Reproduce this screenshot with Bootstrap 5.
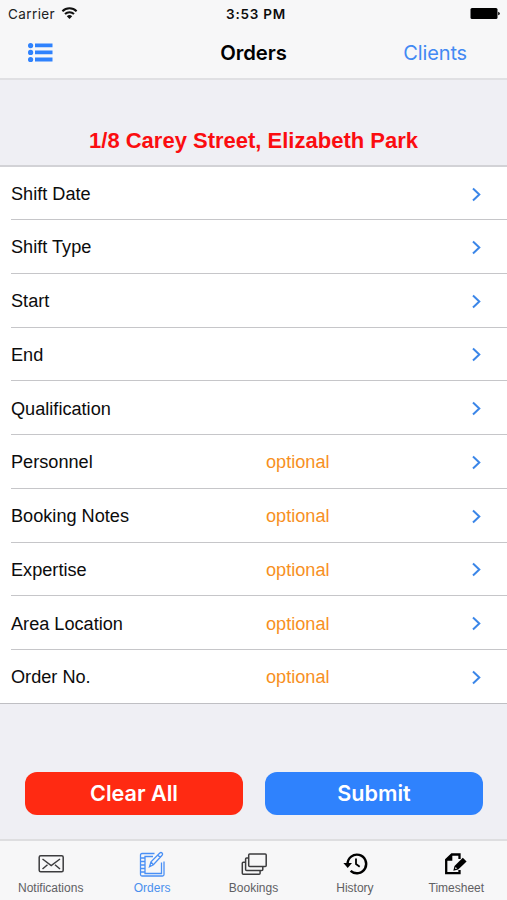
<!DOCTYPE html>
<html lang="en">
<head>
<meta charset="utf-8">
<meta name="viewport" content="width=device-width, initial-scale=1">
<title>Orders</title>
<link href="https://cdn.jsdelivr.net/npm/bootstrap@5.3.0/dist/css/bootstrap.min.css" rel="stylesheet">
<style>
  :root { --ios-blue: #2f82fd; --sans: "Liberation Sans", Arial, sans-serif; --ui: Inter, "Liberation Sans", sans-serif; }
  body { font-family: var(--sans); background: #efeff4; color: #0c0c0c; }
  svg { display: block; flex: none; }
  .screen { height: 900px; overflow: hidden; }
  .top-area { height: 80px; background: #f7f7f8; border-bottom: 2px solid #e0e0e3; font-family: var(--ui); }
  .status { height: 28px; font-size: 13.5px; line-height: 28px; padding: 0 7px 0 8px; }
  .carrier { letter-spacing: .4px; color: #222; margin-right: 2px; }
  .side { flex: 1 1 0; }
  .clock { font-weight: 600; font-size: 13.5px; letter-spacing: .75px; padding-left: 4px; }
  .title-bar { height: 50px; padding: 0 40px 0 28px; }
  .title-bar h1 { font-size: 20.3px; font-weight: 600; color: #000; letter-spacing: -.1px; margin: 0 -6px 0 6px; }
  .clients { font-size: 20px; color: #4289f3; text-decoration: none; letter-spacing: -.15px; }
  .address { height: 85px; padding-top: 47px; font-size: 22px; line-height: 28px; font-weight: 700; color: #fb0d10; white-space: nowrap; }
  .order-list { border-top: 2px solid #d2d2d6; border-bottom: 1px solid #bfbfc3; background: #fff; height: 539px; padding-left: 11px; }
  .order-row { flex: 0 0 53.75px; font-size: 18.15px; color: inherit; text-decoration: none; border-bottom: 1px solid #c6c6c9; padding: 2px 25px 0 0; }
  .order-row:first-child { flex-basis: 53px; }
  .order-row:last-child { border-bottom: 0; flex-basis: 53px; }
  .row-label { width: 255px; }
  .row-label, .opt { padding-top: 1px; }
  .opt { color: #f7901e; }
  .actions { padding: 67.5px 24px 0 25px; gap: 22px; }
  .action { height: 43px; border-radius: 12px; border: 0; padding: 0; font: 600 21.6px/43px var(--ui); color: #fff; }
  .action-clear, .action-clear:hover { background: #ff2a12; color: #fff; }
  .action-submit, .action-submit:hover { background: var(--ios-blue); color: #fff; }
  .tabs { height: 61px; background: #f7f7f8; border-top: 2px solid #dedee0; font-size: 12px; line-height: 14px; }
  .tab { color: #606063; text-decoration: none; padding-top: 9px; gap: 3px; }
  .tab.active { color: #4a90ee; }
</style>
</head>
<body>
<div class="screen d-flex flex-column">
  <header class="top-area flex-shrink-0">
    <div class="status d-flex align-items-center">
      <div class="side d-flex align-items-center gap-1">
        <span class="carrier">Carrier</span>
        <svg width="17" height="14" viewBox="0 0 17 14" fill="none" stroke="#111" stroke-width="2"><path d="M1.4 4.200a10 10 0 0 1 14.2 0M4 7a6.4 6.4 0 0 1 9 0"/><path d="M8.5 12 5.8 9.200a3.9 3.9 0 0 1 5.4 0z" fill="#111" stroke="none"/></svg>
      </div>
      <span class="clock">3:53 PM</span>
      <div class="side d-flex justify-content-end">
        <svg width="30" height="12" viewBox="0 0 30 12"><rect x="0.5" y="0" width="27" height="11" rx="1.5" fill="#000"/><path d="M28.2 3.700q1.6.4 1.6 1.8t-1.6 1.8z" fill="#000"/></svg>
      </div>
    </div>
    <nav class="title-bar d-flex align-items-center">
      <div class="side"><svg width="25" height="20" viewBox="0 0 25 20" fill="#2f82fd"><circle cx="2.6" cy="2.600" r="2.6"/><circle cx="2.6" cy="9.400" r="2.6"/><circle cx="2.6" cy="16.500" r="2.6"/><path d="M7 .5h17.500v3.800H7zM7 7.500h17.500v3.800H7zM7 14.600h17.500v3.800H7z"/></svg></div>
      <h1>Orders</h1>
      <div class="side text-end"><a class="clients" href="#">Clients</a></div>
    </nav>
  </header>

  <div class="address text-center flex-shrink-0">1/8 Carey Street, Elizabeth Park</div>

  <div class="order-list d-flex flex-column flex-shrink-0" id="orderList"></div>

  <div class="actions d-flex">
    <button class="btn action action-clear flex-fill w-50" type="button">Clear All</button>
    <button class="btn action action-submit flex-fill w-50" type="button">Submit</button>
  </div>

  <nav class="tabs d-flex mt-auto flex-shrink-0">
    <a class="tab col d-flex flex-column align-items-center" href="#">
      <svg width="28" height="28" viewBox="0 0 28 28" fill="none" stroke="#3c3c3e" stroke-width="1.500"><rect x="2.200" y="5.700" width="24" height="16" rx="1.500"/><path d="m5.500 9 8.700 6.500L23 9M5.500 19l5-4.200M23 19l-5-4.200"/></svg>
      <span>Notifications</span>
    </a>
    <a class="tab active col d-flex flex-column align-items-center" href="#">
      <svg width="28" height="28" viewBox="0 0 28 28" fill="none" stroke="#4a90f5" stroke-width="1.300"><path d="M16.500 3.500H4Q2.500 3.500 2.500 5v19.500Q2.500 26 4 26h20.500q1.500 0 1.500-1.500V11.500M15 6.500H7v17h16.500V12.500M2.500 8H7M2.500 11.500H7M2.500 15H7M2.500 18.500H7M2.500 22H7"/><path d="m11.500 16.800 1.500-5L21.800 3q1.200-1 2.300 0t0 2.300l-8.700 9.500zM13 11.800l2.400 3M19.800 5l2.400 2.500"/></svg>
      <span>Orders</span>
    </a>
    <a class="tab col d-flex flex-column align-items-center" href="#">
      <svg width="28" height="28" viewBox="0 0 28 28" fill="none" stroke="#3c3c3e" stroke-width="1.500"><rect x="8.700" y="4.100" width="17.500" height="12.400" rx="1"/><path d="M8.700 8.100H6.600q-1 0-1 1v10.300q0 1 1 1h15.200q1 0 1-1V17M5.600 12.300H3.300q-1 0-1 1v10q0 1 1 1h15.800q1 0 1-1v-2.900"/></svg>
      <span>Bookings</span>
    </a>
    <a class="tab col d-flex flex-column align-items-center" href="#">
      <svg width="28" height="28" viewBox="0 0 28 28" fill="none" stroke="#000"><path d="M6.600 14a9.300 9.300 0 1 1 3 6.800" stroke-width="2.400"/><path d="M2.400 13H11l-4.300 5z" fill="#000" stroke="none"/><path d="M15 8.500v5.600l3.700 2.700" stroke-width="1.800"/></svg>
      <span>History</span>
    </a>
    <a class="tab col d-flex flex-column align-items-center" href="#">
      <svg width="28" height="28" viewBox="0 0 28 28" fill="none" stroke="#000"><path d="M17.500 9V4.500H9.800L4.200 9.800v13.400h13.300V20" stroke-width="2.300"/><path d="M10.300 4V10.800H3.500z" fill="#000" stroke="none"/><path d="m11.300 20.800 1.200-4.700 8.300-8.300 3.800 3.800-8.400 8z" fill="#000" stroke="none"/><path d="m13 18.900.6-2 1.500 1.500z" fill="#f7f7f8" stroke="none"/></svg>
      <span>Timesheet</span>
    </a>
  </nav>
</div>
<script src="https://cdn.jsdelivr.net/npm/bootstrap@5.3.0/dist/js/bootstrap.bundle.min.js"></script>
<script>
  const rows = [
    ["Shift Date"], ["Shift Type"], ["Start"], ["End"], ["Qualification"],
    ["Personnel", "optional"], ["Booking Notes", "optional"], ["Expertise", "optional"],
    ["Area Location", "optional"], ["Order No.", "optional"]
  ];
  document.getElementById("orderList").innerHTML = rows.map(([label, note = ""]) => `
    <a class="order-row d-flex align-items-center" href="#">
      <span class="row-label">${label}</span>
      <span class="opt flex-grow-1">${note}</span>
      <svg width="10" height="15" viewBox="0 0 10 15" fill="none" stroke="#3b86e8" stroke-width="2"><path d="m1 1.500 6.300 6-6.300 6"/></svg>
    </a>`).join("");
</script>
</body>
</html>
